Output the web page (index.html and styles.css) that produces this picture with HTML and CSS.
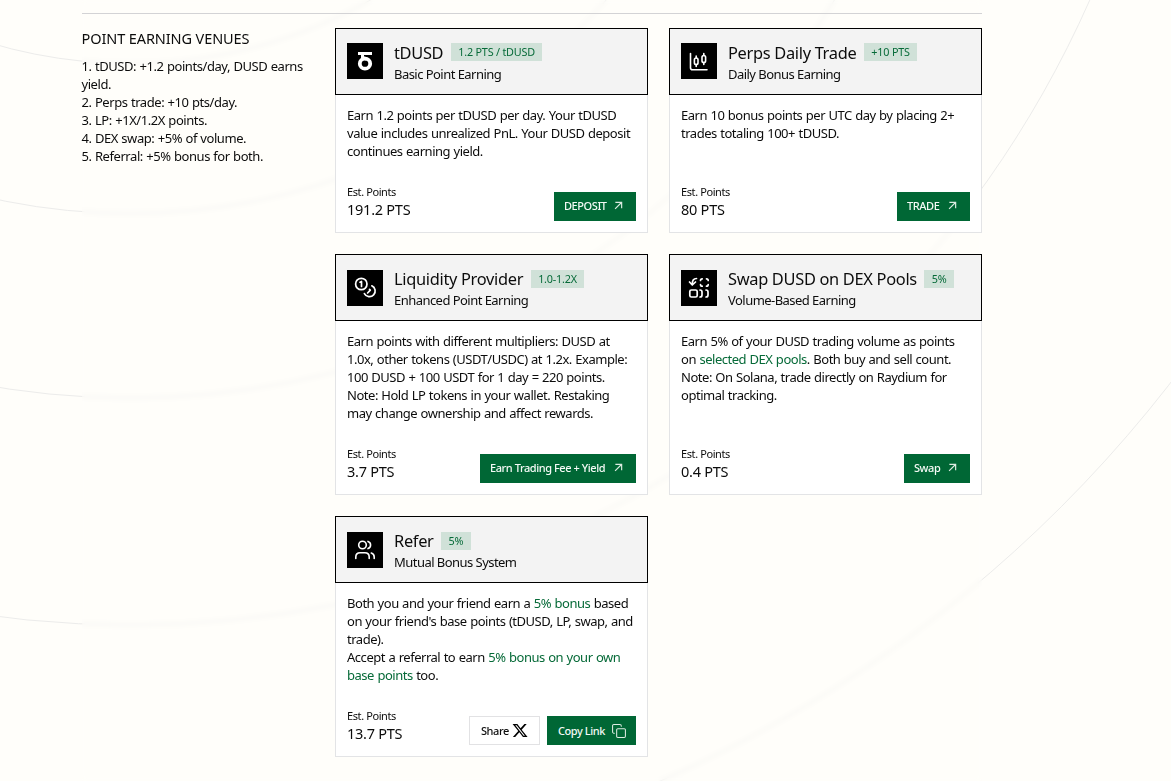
FILE: index.html
```html
<!DOCTYPE html>
<html lang="en">
<head>
<meta charset="utf-8">
<title>Point Earning Venues</title>
<link rel="stylesheet" href="styles.css">
</head>
<body>
<svg class="rings" width="1171" height="781" viewBox="0 0 1171 781" aria-hidden="true">
  <circle cx="130" cy="-424.500" r="488"/><circle cx="130" cy="-424.500" r="638"/><circle cx="130" cy="-424.500" r="822.500"/><circle cx="130" cy="-424.500" r="1049.500"/><circle cx="130" cy="-424.500" r="1317"/>
</svg>
<svg class="defs" aria-hidden="true">
  <symbol id="arrow" viewBox="0 0 10 10"><path d="M1.500 1.500h7v6.500M8.300 1.700 1.200 8.800" fill="none" stroke="currentColor" stroke-width="1.300"/></symbol>
</svg>
<main class="page">
  <section class="venues">
    <aside class="summary">
      <h2 class="summary-title">POINT EARNING VENUES</h2>
      <p class="summary-text">1. tDUSD: +1.2 points/day, DUSD earns<br>yield.<br>2. Perps trade: +10 pts/day.<br>3. LP: +1X/1.2X points.<br>4. DEX swap: +5% of volume.<br>5. Referral: +5% bonus for both.</p>
    </aside>
    <div class="cards">
      <article class="card">
        <header class="card-head">
          <div class="icon"><svg width="36" height="36" viewBox="0 0 36 36"><path d="M11 10.500h14" stroke="#fff" stroke-width="3"/><path d="M15.500 11v3.500l4 1.500" fill="none" stroke="#fff" stroke-width="3"/><ellipse cx="18" cy="20.700" rx="5.200" ry="5" fill="none" stroke="#fff" stroke-width="3.800"/></svg></div>
          <div class="heading"><div class="title-row"><h3 class="title">tDUSD</h3><span class="badge">1.2 PTS / tDUSD</span></div><p class="subtitle">Basic Point Earning</p></div>
        </header>
        <div class="card-body">
          <p class="text">Earn 1.2 points per tDUSD per day. Your tDUSD<br>value includes unrealized PnL. Your DUSD deposit<br>continues earning yield.</p>
          <div class="foot"><div class="points"><span class="points-label">Est. Points</span><span class="points-value">191.2 PTS</span></div>
          <div class="actions"><a class="btn go w-deposit">DEPOSIT<svg class="arrow"><use href="#arrow"/></svg></a></div></div>
        </div>
      </article>
      <article class="card">
        <header class="card-head">
          <div class="icon"><svg width="36" height="36" viewBox="0 0 36 36" fill="none" stroke="#fff" stroke-width="1.600" stroke-linecap="round" stroke-linejoin="round"><path d="M9.500 10.500v14.200q0 2 2 2h14.500M15.200 13v2M15.200 21.500v2M22.800 10.500v2M22.800 19.500v2"/><rect x="13.400" y="15" width="3.600" height="6.500" rx="1.800"/><rect x="21" y="12.500" width="3.600" height="7" rx="1.800"/></svg></div>
          <div class="heading"><div class="title-row"><h3 class="title">Perps Daily Trade</h3><span class="badge">+10 PTS</span></div><p class="subtitle">Daily Bonus Earning</p></div>
        </header>
        <div class="card-body">
          <p class="text">Earn 10 bonus points per UTC day by placing 2+<br>trades totaling 100+ tDUSD.</p>
          <div class="foot"><div class="points"><span class="points-label">Est. Points</span><span class="points-value">80 PTS</span></div>
          <div class="actions"><a class="btn go w-trade">TRADE<svg class="arrow"><use href="#arrow"/></svg></a></div></div>
        </div>
      </article>
      <article class="card">
        <header class="card-head">
          <div class="icon"><svg width="36" height="36" viewBox="0 0 36 36" fill="none" stroke="#fff" stroke-width="1.700" stroke-linecap="round" stroke-linejoin="round"><circle cx="14.300" cy="14" r="5.700"/><path d="M13 12.200l1.500-.7v5M24.800 15.800a5.700 5.700 0 1 1-7.400 7.800M22.500 19.300l.8.800-2.700 2.900"/></svg></div>
          <div class="heading"><div class="title-row"><h3 class="title">Liquidity Provider</h3><span class="badge">1.0-1.2X</span></div><p class="subtitle">Enhanced Point Earning</p></div>
        </header>
        <div class="card-body">
          <p class="text">Earn points with different multipliers: DUSD at<br>1.0x, other tokens (USDT/USDC) at 1.2x. Example:<br>100 DUSD + 100 USDT for 1 day = 220 points.<br>Note: Hold LP tokens in your wallet. Restaking<br>may change ownership and affect rewards.</p>
          <div class="foot"><div class="points"><span class="points-label">Est. Points</span><span class="points-value">3.7 PTS</span></div>
          <div class="actions"><a class="btn go w-earn">Earn Trading Fee + Yield<svg class="arrow"><use href="#arrow"/></svg></a></div></div>
        </div>
      </article>
      <article class="card">
        <header class="card-head">
          <div class="icon"><svg width="36" height="36" viewBox="0 0 36 36" fill="none" stroke="#fff" stroke-width="1.700" stroke-linecap="round" stroke-linejoin="round"><rect x="8.800" y="20" width="7.400" height="7" rx="1.600"/><path d="M15.500 8.500q-4.200 0-4.200 5.500M8.500 12l2.800 3 3.200-3M19.500 10.500q0-1.700 1.700-1.700M25.500 8.800q1.700 0 1.700 1.700M27.200 14.500q0 1.700-1.700 1.700M21.200 16.200q-1.700 0-1.700-1.700M19 20q2 0 2 2v3q0 2-2 2M25 20q2 0 2 2v3q0 2-2 2"/></svg></div>
          <div class="heading"><div class="title-row"><h3 class="title">Swap DUSD on DEX Pools</h3><span class="badge">5%</span></div><p class="subtitle">Volume-Based Earning</p></div>
        </header>
        <div class="card-body">
          <p class="text">Earn 5% of your DUSD trading volume as points<br>on <a class="link">selected DEX pools</a>. Both buy and sell count.<br>Note: On Solana, trade directly on Raydium for<br>optimal tracking.</p>
          <div class="foot"><div class="points"><span class="points-label">Est. Points</span><span class="points-value">0.4 PTS</span></div>
          <div class="actions"><a class="btn go w-swap">Swap<svg class="arrow"><use href="#arrow"/></svg></a></div></div>
        </div>
      </article>
      <article class="card">
        <header class="card-head">
          <div class="icon"><svg width="36" height="36" viewBox="0 0 36 36" fill="none" stroke="#fff" stroke-width="1.600" stroke-linecap="round" stroke-linejoin="round"><circle cx="15.500" cy="13" r="3.800"/><path d="M8.800 26.500v-1.500q0-4.300 4.300-4.300h4.800q4.300 0 4.300 4.300v1.500M21 9.400a3.800 3.800 0 0 1 0 7.200M24.300 21q2.900.8 2.900 4v1.500"/></svg></div>
          <div class="heading"><div class="title-row"><h3 class="title">Refer</h3><span class="badge">5%</span></div><p class="subtitle">Mutual Bonus System</p></div>
        </header>
        <div class="card-body">
          <p class="text">Both you and your friend earn a <a class="link">5% bonus</a> based<br>on your friend's base points (tDUSD, LP, swap, and<br>trade).<br>Accept a referral to earn <a class="link">5% bonus on your own<br>base points</a> too.</p>
          <div class="foot"><div class="points"><span class="points-label">Est. Points</span><span class="points-value">13.7 PTS</span></div>
          <div class="actions"><a class="btn outline w-share">Share<svg class="x-logo" width="15" height="15" viewBox="0 0 24 24" fill="#000"><path d="M18.240 1.500h3.680l-8.040 9.190L23.340 22.500h-7.410l-5.800-7.590L3.490 22.500H-.2l8.600-9.830L-.66 1.500h7.600l5.240 6.930zM16.950 20.400h2.040L5.830 3.500H3.640z"/></svg></a><a class="btn w-copy">Copy Link<svg width="14" height="14" viewBox="0 0 24 24" fill="none" stroke="#dcebe1" stroke-width="1.800" stroke-linejoin="round" stroke-linecap="round"><rect x="8" y="8" width="15" height="15" rx="2"/><path d="M4 16c-1.500 0-3-1-3-2.500V3c0-1 1-2 2-2h10.500C15 1 16 2.500 16 4"/></svg></a></div></div>
        </div>
      </article>
    </div>
  </section>
</main>
</body>
</html>
```
FILE: styles.css
```css
* { box-sizing: border-box; margin: 0; padding: 0; }
html, body { height: 781px; overflow: hidden; }
body {
  background: #fffefa;
  color: #0c0c0c;
  font-family: "Noto Sans", "Open Sans", sans-serif;
  font-size: 13px;
  line-height: 18px;
}
/* Decorative rings behind the page content */
.rings { position: absolute; left: 0; top: 0; z-index: -1; fill: none; stroke: #ececeb; stroke-width: 1; }
.defs { position: absolute; width: 0; height: 0; }
.page { width: 900px; height: 781px; margin-left: 82px; padding-top: 13px; backdrop-filter: blur(2.5px); }
.venues { display: grid; grid-template-columns: 253px 647px; border-top: 1px solid #d3d3d5; padding-top: 14.3px; }
.summary-title { font-size: 14.5px; font-weight: 400; line-height: 21px; letter-spacing: -0.1px; margin-bottom: 8px; margin-left: -0.5px; }
.summary-text { letter-spacing: -0.43px; word-spacing: 0.4px; white-space: nowrap; margin-left: -0.5px; }
.cards { display: grid; grid-template-columns: 313px 313px; grid-template-rows: 205.150px 241px 241px; gap: 21px; }
.card { display: flex; flex-direction: column; background: #fff; }
.card-head { display: flex; gap: 11px; height: 67px; padding: 14px 11px; border: 1px solid #000; background: #f3f3f3; }
.icon { display: flex; align-items: center; justify-content: center; flex: none; width: 36px; height: 36px; margin-top: 0.1px; background: #000; }
.heading { margin-top: -1px; }
.title-row { display: flex; align-items: center; gap: 7.5px; height: 22px; }
.title { font-size: 16.4px; font-weight: 400; line-height: 22px; letter-spacing: -0.31px; white-space: nowrap; }
.badge { height: 18px; padding: 0 7.5px; margin-top: -1.8px; background: #d0e1d8; color: #066a38; font-size: 10.8px; line-height: 18px; letter-spacing: -0.2px; white-space: nowrap; }
.subtitle { letter-spacing: -0.54px; line-height: 20px; white-space: nowrap; }
.card-body { display: flex; flex: 1; flex-direction: column; justify-content: space-between; padding: 11px; border: 1px solid #e3e4e6; border-top: 0; }
.text { letter-spacing: -0.47px; word-spacing: 0.5px; white-space: nowrap; }
.link { color: #066a38; }
.foot { display: flex; align-items: flex-end; justify-content: space-between; height: 38px; }
.points { display: flex; flex-direction: column; height: 38px; }
.points-label { font-size: 11px; line-height: 18px; letter-spacing: -0.4px; }
.points-value { font-size: 14.5px; line-height: 17px; letter-spacing: -0.25px; }
.actions { display: flex; gap: 7px; }
.btn { display: flex; align-items: center; justify-content: space-between; height: 29px; padding: 0 10px 0 11px; background: #006735; color: #f4faf6; font-size: 11px; font-weight: 500; letter-spacing: -0.43px; white-space: nowrap; }
.go { padding: 0 10px 2px; }
.arrow { width: 9px; height: 9px; margin-right: 3.5px; color: #dcebe1; }
.x-logo { margin-right: 1px; overflow: visible; }
.outline { border: 1px solid #e2e2e4; background: #fff; color: #0c0c0c; }
.w-deposit { width: 82px; }
.w-trade { width: 73px; }
.w-earn { width: 156px; }
.w-swap { width: 66px; }
.w-share { width: 71px; }
.w-copy { width: 89px; }
```
